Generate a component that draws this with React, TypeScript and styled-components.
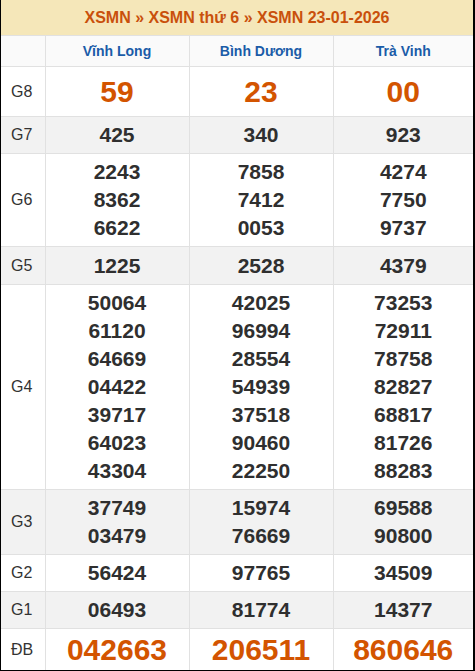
import React from 'react';
import styled, { createGlobalStyle } from 'styled-components';

const GlobalStyle = createGlobalStyle`
  html, body {
    margin: 0;
    padding: 0;
    background: #ffffff;
    font-family: "Liberation Sans", Arial, sans-serif;
  }
`;

const colors = {
  headBg: '#f5e7b9',
  title: '#c9500c',
  prize: '#d35400',
  province: '#1a5ca8',
  text: '#2f2f2f',
  label: '#333333',
  line: '#e1e1e1',
  stripe: '#f2f2f2',
  colHead: '#fafafa',
};

const Frame = styled.div`
  width: 475px;
  height: 671px;
  box-sizing: border-box;
  border-left: 1px solid #000;
  border-right: 2px solid #000;
  border-bottom: 1px solid #000;
  overflow: hidden;
`;

const Table = styled.table`
  width: 100%;
  border-collapse: collapse;
  table-layout: fixed;
  font-family: "Liberation Sans", Arial, sans-serif;
`;

const Title = styled.th`
  height: 35px;
  padding: 0;
  background: ${colors.headBg};
  color: ${colors.title};
  font-size: 16px;
  font-weight: bold;
  text-align: center;
  border-bottom: 1px solid ${colors.line};
`;

const ProvinceCell = styled.th`
  height: 30px;
  padding: 0;
  background: ${colors.colHead};
  color: ${colors.province};
  font-size: 14px;
  font-weight: bold;
  text-align: center;
  border: 1px solid ${colors.line};
  border-top: none;

  &:first-child {
    border-left: none;
  }
  &:last-child {
    border-right: none;
  }
`;

const Row = styled.tr<{ $stripe?: boolean }>`
  background: ${(p) => (p.$stripe ? colors.stripe : '#ffffff')};
`;

const Label = styled.td`
  padding: 0 0 0 10px;
  font-size: 16px;
  color: ${colors.label};
  border-bottom: 1px solid ${colors.line};
  border-right: 1px solid ${colors.line};
  text-align: left;
`;

const Prize = styled.td<{ $big?: boolean; $lh: number }>`
  padding: 4px 0;
  text-align: center;
  vertical-align: middle;
  font-weight: bold;
  font-size: ${(p) => (p.$big ? '30px' : '21px')};
  line-height: ${(p) => p.$lh}px;
  color: ${(p) => (p.$big ? colors.prize : colors.text)};
  border-bottom: 1px solid ${colors.line};
  border-right: 1px solid ${colors.line};

  &:last-child {
    border-right: none;
  }
`;

const Number = styled.div``;

type Prize = { name: string; big?: boolean; lh?: number; values: string[][] };

const provinces = ['Vĩnh Long', 'Bình Dương', 'Trà Vinh'];

const prizes: Prize[] = [
  { name: 'G8', big: true, lh: 41, values: [['59'], ['23'], ['00']] },
  { name: 'G7', values: [['425'], ['340'], ['923']] },
  {
    name: 'G6',
    values: [
      ['2243', '8362', '6622'],
      ['7858', '7412', '0053'],
      ['4274', '7750', '9737'],
    ],
  },
  { name: 'G5', lh: 29, values: [['1225'], ['2528'], ['4379']] },
  {
    name: 'G4',
    values: [
      ['50064', '61120', '64669', '04422', '39717', '64023', '43304'],
      ['42025', '96994', '28554', '54939', '37518', '90460', '22250'],
      ['73253', '72911', '78758', '82827', '68817', '81726', '88283'],
    ],
  },
  {
    name: 'G3',
    values: [
      ['37749', '03479'],
      ['15974', '76669'],
      ['69588', '90800'],
    ],
  },
  { name: 'G2', values: [['56424'], ['97765'], ['34509']] },
  { name: 'G1', values: [['06493'], ['81774'], ['14377']] },
  { name: 'ĐB', big: true, lh: 34, values: [['042663'], ['206511'], ['860646']] },
];

export default function App() {
  return (
    <>
      <GlobalStyle />
      <Frame>
        <Table>
          <colgroup>
            <col style={{ width: 44 }} />
            <col style={{ width: 144 }} />
            <col style={{ width: 144 }} />
            <col />
          </colgroup>
          <thead>
            <tr>
              <Title colSpan={4}>XSMN » XSMN thứ 6 » XSMN 23-01-2026</Title>
            </tr>
            <tr>
              <ProvinceCell />
              {provinces.map((p) => (
                <ProvinceCell key={p}>{p}</ProvinceCell>
              ))}
            </tr>
          </thead>
          <tbody>
            {prizes.map((prize, i) => (
              <Row key={prize.name} $stripe={i % 2 === 1}>
                <Label>{prize.name}</Label>
                {prize.values.map((col, j) => (
                  <Prize key={j} $big={prize.big} $lh={prize.lh ?? 28}>
                    {col.map((v) => (
                      <Number key={v}>{v}</Number>
                    ))}
                  </Prize>
                ))}
              </Row>
            ))}
          </tbody>
        </Table>
      </Frame>
    </>
  );
}
